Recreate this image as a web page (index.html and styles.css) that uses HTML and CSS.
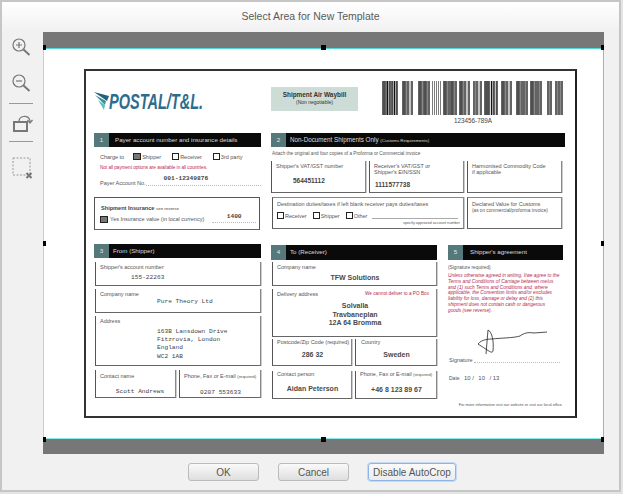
FILE: index.html
```html
<!DOCTYPE html>
<html lang="en">
<head>
    <meta charset="UTF-8">
    <title>Select Area for New Template</title>
    <link rel="stylesheet" href="styles.css">
</head>
<body>
    <div class="dialog">
        <div class="title">Select Area for New Template</div>
        <div class="main">
            <div class="toolbar">
                <svg class="tool" width="20" height="20" viewBox="0 0 20 20">
                    <circle cx="8" cy="8" r="6"/>
                    <path d="M5 8h6M8 5v6"/>
                    <path class="thick" d="M12.500 12.500l6 5.500"/>
                </svg>
                <svg class="tool" width="20" height="20" viewBox="0 0 20 20">
                    <circle cx="8" cy="8" r="6"/>
                    <path d="M5 8h6"/>
                    <path class="thick" d="M12.500 12.500l6 5.500"/>
                </svg>
                <div class="sep"></div>
                <svg class="tool" width="22" height="20" viewBox="0 0 22 20">
                    <rect class="thick" x="2" y="8" width="13" height="9"/>
                    <path d="M7 7.500c0-6 9-7 11-1l0 2"/>
                    <path d="M15.500 6l2.500 3 2.500-3"/>
                </svg>
                <div class="sep"></div>
                <svg class="tool" width="22" height="22" viewBox="0 0 22 22">
                    <rect class="dashed" x="1" y="1" width="17" height="17"/>
                    <path class="thick" d="M14.500 16l5 5M19.500 16l-5 5"/>
                </svg>
            </div>

            <div class="canvas">
                <div class="paper">
                    <div class="paper-top">
                        <div class="logo">
                            <svg width="15" height="19" viewBox="0 0 15 19">
                                <path class="wing-dark" d="M0 0l15 4-2 5z"/>
                                <path class="wing-mid" d="M1 3l11 6-1 4z"/>
                                <path class="wing-light" d="M4 8l7 5-1 5z"/>
                            </svg>
                            <span class="logo-text">POSTAL/T&amp;L.</span>
                        </div>
                        <div class="waybill">
                            <div class="waybill-name">Shipment Air Waybill</div>
                            <div class="waybill-note">(Non negotiable)</div>
                        </div>
                        <div class="barcode">
                            <svg width="184" height="34" viewBox="0 0 184 34">
                                <path class="bar-gray" d="M3 0v34M5.500 0v34M8 0v34M12 0v34M15 0v34M23 0v34M25.500 0v34M29 0v34M39 0v34M41.500 0v34M44 0v34M46.500 0v34M64 0v34M66.500 0v34M71 0v34M73.500 0v34M80 0v34M82.500 0v34M86 0v34M94.500 0v34M98 0v34M105 0v34M107 0v34M112 0v34M115 0v34M122 0v34M124.500 0v34M128 0v34M137 0v34M139.500 0v34M144.500 0v34M151 0v34M153.500 0v34M158.500 0v34M168.500 0v34M176.500 0v34M179.500 0v34"/>
                                <path class="bar-thin" d="M51.500 0v34M53.500 0v34M55.500 0v34M57.500 0v34M59.500 0v34"/>
                                <path class="bar-dark" d="M2 0v34M4 0v34M6.500 0v34M9 0v34M11 0v34M13.500 0v34M16 0v34M22 0v34M24 0v34M27 0v34M31 0v34M38 0v34M40 0v34M43 0v34M45 0v34M48 0v34M63 0v34M65 0v34M68 0v34M70 0v34M72 0v34M75 0v34M79 0v34M81 0v34M84 0v34M88 0v34M93 0v34M96 0v34M100 0v34M104 0v34M106 0v34M108 0v34M110.500 0v34M113 0v34M116 0v34M121 0v34M123 0v34M126 0v34M130 0v34M136 0v34M138 0v34M141 0v34M143 0v34M146 0v34M150 0v34M152 0v34M155 0v34M157 0v34M160 0v34M167 0v34M170 0v34M175 0v34M178 0v34M181 0v34"/>
                            </svg>
                            <div class="barcode-num">123456-789A</div>
                        </div>
                    </div>

                    <div class="row-upper">
                        <div class="col-payer">
                            <div class="sec-head"><span class="sec-num">1</span><span class="sec-name">Payer account number and insurance details</span></div>
                            <div class="charge">
                                <span class="charge-label">Charge to</span>
                                <span class="check on"></span><span class="opt opt-wide">Shipper</span>
                                <span class="check"></span><span class="opt opt-wide">Receiver</span>
                                <span class="check"></span><span class="opt">3rd party</span>
                            </div>
                            <div class="red note">Not all payment options are available in all countries.</div>
                            <div class="payer-line">
                                <span>Payer Account No.</span>
                                <span class="fill"><span class="mono bold">001-12349876</span></span>
                            </div>
                            <div class="insurance">
                                <div class="ins-title"><b>Shipment Insurance</b> <small>see reverse</small></div>
                                <div class="ins-row">
                                    <span class="check on"></span>
                                    <span>Yes Insurance value (in local currency)</span>
                                    <span class="fill ins-fill"><span class="mono bold">1400</span></span>
                                </div>
                            </div>
                        </div>

                        <div class="col-goods">
                            <div class="sec-head"><span class="sec-num">2</span><span class="sec-name sec-name-big">Non-Document Shipments Only <small>(Customs Requirements)</small></span></div>
                            <div class="attach">Attach the original and four copies of a Proforma or Commercial invoice</div>
                            <div class="goods-grid">
                                <div class="box">
                                    <div>Shipper's VAT/GST number</div>
                                    <div class="goods-val goods-val-a">564451112</div>
                                </div>
                                <div class="box">
                                    <div>Receiver's VAT/GST or<br>Shipper's EIN/SSN</div>
                                    <div class="goods-val goods-val-b">1111577738</div>
                                </div>
                                <div class="box">
                                    <div>Harmonised Commodity Code<br>if applicable</div>
                                </div>
                                <div class="box box-wide">
                                    <div>Destination duties/taxes if left blank receiver pays duties/taxes</div>
                                    <div class="dest-row">
                                        <span class="check"></span><span class="opt opt-wide">Receiver</span>
                                        <span class="check"></span><span class="opt opt-wide">Shipper</span>
                                        <span class="check"></span><span class="opt">Other</span>
                                        <span class="dest-line"></span>
                                    </div>
                                    <div class="specify">specify approved account number</div>
                                </div>
                                <div class="box">
                                    <div>Declared Value for Customs<br><span class="declared-note">(as on commercial/proforma invoice)</span></div>
                                </div>
                            </div>
                        </div>
                    </div>

                    <div class="row-lower">
                        <div class="col-from">
                            <div class="sec-head"><span class="sec-num">3</span><span class="sec-name">From (Shipper)</span></div>
                            <div class="box h-24 first">
                                <div>Shipper's account number</div>
                                <div class="mono indent-a">155-22263</div>
                            </div>
                            <div class="box h-24">
                                <div>Company name</div>
                                <div class="mono indent-b up-3">Pure Theory Ltd</div>
                            </div>
                            <div class="box h-50">
                                <div>Address</div>
                                <div class="mono indent-b address">163B Lansdown Drive<br>Fitzrovia, London<br>England<br>WC2 1AB</div>
                            </div>
                            <div class="pair">
                                <div class="box h-28">
                                    <div>Contact name</div>
                                    <div class="mono center down-8 nudge">Scott Andrews</div>
                                </div>
                                <div class="box h-28">
                                    <div>Phone, Fax or E-mail <small>(required)</small></div>
                                    <div class="mono center down-8">0207 553633</div>
                                </div>
                            </div>
                        </div>

                        <div class="col-to">
                            <div class="sec-head"><span class="sec-num">4</span><span class="sec-name">To (Receiver)</span></div>
                            <div class="box h-24 first">
                                <div>Company name</div>
                                <div class="val val-company center">TFW Solutions</div>
                            </div>
                            <div class="box h-48">
                                <div class="delivery-head"><span>Delivery address</span><span class="red">We cannot deliver to a PO Box</span></div>
                                <div class="val val-address center">Solvalla<br>Travbaneplan<br>12A 64 Bromma</div>
                            </div>
                            <div class="pair pair-tight">
                                <div class="box h-27">
                                    <div>Postcode/Zip Code (required)</div>
                                    <div class="val val-post center">286 32</div>
                                </div>
                                <div class="box h-27">
                                    <div class="indent-c">Country</div>
                                    <div class="val val-post center">Sweden</div>
                                </div>
                            </div>
                            <div class="pair pair-tight pair-gap">
                                <div class="box h-28">
                                    <div>Contact person</div>
                                    <div class="val val-contact center">Aidan Peterson</div>
                                </div>
                                <div class="box h-28">
                                    <div>Phone, Fax or E-mail <small>(required)</small></div>
                                    <div class="val val-contact center">+46 8 123 89 67</div>
                                </div>
                            </div>
                        </div>

                        <div class="col-sign">
                            <div class="sec-head"><span class="sec-num">5</span><span class="sec-name">Shipper's agreement</span></div>
                            <div class="sign-req">(Signature required)</div>
                            <div class="red terms">Unless otherwise agreed in writing, I/we agree to the<br>Terms and Conditions of Carriage between me/us<br>and (1) such Terms and Conditions and, where<br>applicable, the Convention limits and/or excludes<br>liability for loss, damage or delay and (2) this<br>shipment does not contain cash or dangerous<br>goods (see reverse).</div>
                            <svg class="signature" width="100" height="40" viewBox="0 0 100 40">
                                <path d="M30 27L32 3C36 5 38 14 37 24C36 27 33 24 22 17C26 12 34 12 36 12C44 11 58 11 64 9C68 6 72 5 78 6L91 5"/>
                            </svg>
                            <div class="sign-line"><span>Signature</span><span class="fill"></span></div>
                            <div class="date">Date <span>10 /</span> <span>10</span> <span>/ 13</span></div>
                            <div class="more">For more information visit our website or visit our local office</div>
                        </div>
                    </div>
                </div>

                <span class="handle h-tl"></span>
                <span class="handle h-tc"></span>
                <span class="handle h-tr"></span>
                <span class="handle h-ml"></span>
                <span class="handle h-mr"></span>
                <span class="handle h-bl"></span>
                <span class="handle h-bc"></span>
                <span class="handle h-br"></span>
            </div>
        </div>
        <div class="buttons">
            <button class="btn btn-ok">OK</button>
            <button class="btn btn-cancel">Cancel</button>
            <button class="btn btn-auto">Disable AutoCrop</button>
        </div>
    </div>
</body>
</html>
```

FILE: styles.css
```css
html, body {
    margin: 0;
    padding: 0;
    background: #e4e4e4;
}
body {
    width: 623px;
    height: 494px;
    overflow: hidden;
    font-family: "Liberation Sans", Arial, sans-serif;
}
.dialog {
    box-sizing: border-box;
    width: 621px;
    height: 492px;
    border: 2px solid #c6c6c6;
    background: #f1f1f1;
    display: flex;
    flex-direction: column;
}
.title {
    height: 30px;
    line-height: 28px;
    text-align: center;
    font-size: 10.500px;
    color: #5a5a5a;
    background: linear-gradient(#fff, #f1f1f1);
}
.main {
    display: flex;
    height: 422px;
}

/* left tools */
.toolbar {
    width: 41px;
    display: flex;
    flex-direction: column;
    align-items: center;
    padding: 5px 3px 0 0;
    box-sizing: border-box;
}
.tool {
    fill: none;
    stroke: #777;
    stroke-width: 1.200;
    flex: none;
}
.tool .thick {
    stroke-width: 2;
}
.tool .dashed {
    stroke: #999;
    stroke-width: 1;
    stroke-dasharray: 2 1.500;
}
.toolbar .tool:nth-child(1) {
    margin-bottom: 16px;
}
.toolbar .tool:nth-child(2) {
    margin-bottom: 10px;
}
.toolbar .tool:nth-child(4) {
    margin: 10px 0 7px 3px;
}
.toolbar .tool:nth-child(6) {
    margin: 15px 0 0 3px;
}
.sep {
    width: 24px;
    height: 1px;
    background: #999;
}

/* crop canvas */
.canvas {
    position: relative;
    box-sizing: border-box;
    width: 561px;
    height: 422px;
    padding: 21px 0 0 41px;
    background: #fff;
    border-top: 16px solid #777;
    border-bottom: 15px solid #777;
    box-shadow: inset 1px 0 0 #8eeaea, inset -1px 0 0 #4fd6d6, inset 0 1px 0 #4fd6d6, inset 0 -1px 0 #8eeaea;
}
.handle {
    position: absolute;
    width: 5px;
    height: 5px;
    background: #000;
}
.h-tl { left: 0; top: -3px; width: 3px; }
.h-tc { left: 278px; top: -3px; }
.h-tr { right: 0; top: -3px; width: 3px; }
.h-ml { left: 0; top: 193px; width: 3px; }
.h-mr { right: 0; top: 193px; width: 3px; }
.h-bl { left: 0; bottom: -3px; width: 3px; }
.h-bc { left: 278px; bottom: -3px; }
.h-br { right: 0; bottom: -3px; width: 3px; }

/* the waybill */
.paper {
    box-sizing: border-box;
    width: 493px;
    height: 349px;
    padding: 0 0 0 8px;
    border: 2px solid #333;
    border-right-color: #222;
    background: #fff;
    font-size: 5.500px;
    color: #555;
}
.paper small {
    font-size: 4.400px;
}
.paper-top {
    display: flex;
    height: 62px;
}
.logo {
    width: 177px;
    display: flex;
    align-items: flex-start;
    padding-top: 21px;
    box-sizing: border-box;
}
.logo svg {
    flex: none;
}
.wing-dark { fill: #24607f; }
.wing-mid { fill: #3c8f98; }
.wing-light { fill: #5fc0ba; }
.logo-text {
    display: inline-block;
    font-size: 22px;
    line-height: 20px;
    font-weight: bold;
    font-style: italic;
    color: #2d6c8e;
    white-space: nowrap;
    transform: scaleX(0.66);
    transform-origin: left top;
}
.waybill {
    width: 87px;
    height: 24px;
    margin-top: 16px;
    background: #cddcd6;
    text-align: center;
    box-sizing: border-box;
    padding-top: 4px;
    color: #333;
}
.waybill-name {
    font-weight: bold;
    font-size: 6.400px;
    line-height: 8px;
}
.waybill-note {
    font-size: 5px;
    line-height: 6px;
}
.barcode {
    margin: 10px 0 0 23px;
    width: 184px;
    text-align: center;
}
.barcode svg {
    display: block;
}
.bar-dark {
    stroke: #111;
    stroke-width: 1.300;
    fill: none;
}
.bar-gray {
    stroke: #888;
    stroke-width: 1;
    fill: none;
}
.bar-thin {
    stroke: #444;
    stroke-width: 0.700;
    fill: none;
}
.barcode-num {
    font-size: 6.300px;
    line-height: 8px;
    margin-top: 2px;
    color: #444;
}

.row-upper {
    display: flex;
    gap: 10px;
    height: 111px;
}
.row-lower {
    display: flex;
    gap: 10px;
}
.col-payer, .col-from {
    width: 167px;
}
.col-goods {
    width: 294px;
}
.col-to {
    width: 166px;
}
.col-sign {
    width: 115px;
    margin-left: 1px;
}
.col-to, .col-sign {
    padding-top: 1px;
}
.col-to .sec-head, .col-sign .sec-head {
    height: 15px;
}
.sec-head {
    display: flex;
    height: 14px;
    background: #0a0a0a;
    color: #ddd;
    font-size: 6.200px;
    line-height: 14px;
}
.sec-num {
    width: 15px;
    background: #55797a;
    text-align: center;
    margin-right: 6px;
    color: #e8e8e8;
}
.col-goods .sec-num, .col-from .sec-num, .col-to .sec-num {
    margin-right: 4px;
}
.col-sign .sec-num {
    margin-right: 7px;
}
.sec-name {
    white-space: nowrap;
}
.sec-name-big {
    font-size: 6.300px;
}
.sec-name-big small {
    font-size: 4.400px;
}
.red {
    color: #b8284e;
}
.mono {
    font-family: "Liberation Mono", "Courier New", monospace;
    font-size: 6.200px;
    color: #444;
    white-space: nowrap;
}
.bold {
    font-weight: bold;
}
.center {
    text-align: center;
}
.fill {
    flex: 1;
    border-bottom: 1px dotted #bbb;
    text-align: center;
    height: 8px;
}

/* check boxes */
.check {
    display: inline-block;
    box-sizing: border-box;
    width: 7px;
    height: 7px;
    border: 1px solid #222;
    vertical-align: -1px;
    flex: none;
}
.check.on {
    width: 8px;
    background: #777;
}
.opt {
    margin-left: 1px;
}
.opt-wide {
    margin-right: 6px;
}
.charge .opt-wide {
    margin-right: 11px;
}

/* section 1 */
.charge {
    display: flex;
    align-items: center;
    height: 7px;
    margin: 6px 0 0 6px;
}
.charge-label {
    margin-right: 9px;
}
.note {
    font-size: 4.600px;
    line-height: 6px;
    margin: 5px 0 0 6px;
}
.payer-line {
    display: flex;
    align-items: flex-end;
    margin: 6px 0 0 6px;
    height: 9px;
}
.payer-line .fill {
    text-align: left;
    padding-left: 18px;
}
.payer-line .mono {
    position: relative;
    top: -2px;
}
.insurance {
    box-sizing: border-box;
    width: 166px;
    height: 33px;
    margin-top: 11px;
    padding: 7px 3px 0 6px;
    border: 1px solid #555;
    border-bottom-color: #666;
}
.ins-title {
    color: #444;
    line-height: 7px;
    font-size: 5.600px;
}
.ins-row {
    display: flex;
    align-items: center;
    gap: 2px;
    margin: 3px 0 0 -1px;
}
.ins-fill {
    margin-left: 6px;
    height: 7px;
}
.ins-fill .mono {
    position: relative;
    top: -2px;
}

/* boxes */
.box {
    box-sizing: border-box;
    padding: 2px 3px 0 4px;
    border: 1px solid #555;
    border-top: none;
    border-right-color: #888;
    border-bottom: 1px solid #666;
    line-height: 6px;
    box-shadow: 1px 0 0 #ccc;
    overflow: hidden;
    white-space: nowrap;
}
.h-24 { height: 24px; margin-top: 3px; }
.h-50 { height: 50px; margin-top: 3px; }
.h-48 { height: 48px; margin-top: 3px; }
.h-27 { height: 27px; }
.h-28 { height: 28px; }
.col-from .first { margin-top: 4px; }
.col-to .first { margin-top: 2px; }
.pair {
    display: grid;
    grid-template-columns: 81px 82px;
    gap: 3px;
    margin: 4px 0 0 1px;
}
.pair .box {
    padding-top: 3px;
}
.pair-tight {
    margin: 2px 0 0 1px;
    grid-template-columns: 80px 82px;
}
.pair-tight .box {
    padding-top: 0;
}
.pair-gap {
    margin-top: 5px;
}
.indent-a {
    margin: 5px 0 0 31px;
}
.indent-b {
    margin-left: 57px;
}
.indent-c {
    margin-left: 1px;
}
.up-3 {
    margin-top: 2px;
}
.address {
    margin-top: 4px;
    line-height: 8.200px;
}
.down-8 {
    margin-top: 10px;
}
.nudge {
    padding-left: 8px;
}
.val {
    font-weight: bold;
    font-size: 7px;
    line-height: 8.500px;
    color: #4a4a4a;
}
.val-company {
    margin-top: 4px;
}
.val-address {
    margin-top: 5px;
}
.val-post {
    margin-top: 6px;
}
.val-contact {
    margin-top: 8px;
}
.delivery-head {
    display: flex;
    justify-content: space-between;
    padding-right: 4px;
}
.delivery-head .red {
    font-size: 4.700px;
}
.col-from .box, .col-to .box {
    margin-left: 1px;
}
.col-from .pair .box, .col-to .pair .box {
    margin-left: 0;
    margin-top: 0;
}

/* section 2 */
.attach {
    font-size: 4.700px;
    line-height: 6px;
    margin: 4px 0 4px 1px;
    white-space: nowrap;
}
.goods-grid {
    display: grid;
    grid-template-columns: 95px 95px 95px;
    column-gap: 3px;
    row-gap: 4px;
    grid-template-rows: 32px 32px;
}
.box-wide {
    grid-column: span 2;
    margin-left: 1px;
    padding-top: 3px;
}
.goods-grid .box:nth-child(4), .goods-grid .box:nth-child(5) {
    border-top: 1px solid #888;
}
.goods-grid .box:nth-child(5) {
    padding-top: 3px;
}
.declared-note {
    font-size: 4.700px;
}
.goods-val {
    font-weight: bold;
    font-size: 6.500px;
    color: #444;
}
.goods-val-a {
    margin: 9px 0 0 17px;
}
.goods-val-b {
    margin: 7px 0 0 1px;
}
.dest-row {
    display: flex;
    align-items: center;
    margin-top: 5px;
    white-space: nowrap;
}
.dest-line {
    flex: 1;
    margin-left: 5px;
    height: 5px;
    border-bottom: 1px solid #aaa;
    margin-right: 2px;
}
.specify {
    text-align: right;
    font-size: 3.800px;
    line-height: 6px;
    margin-top: 1px;
}

/* section 5 */
.sign-req {
    margin-top: 5px;
    line-height: 6px;
    font-size: 4.800px;
}
.terms {
    font-size: 4.800px;
    line-height: 5.800px;
    font-style: italic;
    margin: 2px 0 0 0;
    white-space: nowrap;
}
.signature {
    display: block;
    margin: 13px 0 0 8px;
    fill: none;
    stroke: #222;
    stroke-width: 0.800;
}
.sign-line {
    display: flex;
    margin-top: -10px;
    height: 8px;
    padding-left: 1px;
    width: 111px;
}
.sign-line .fill {
    margin-left: 1px;
    height: 5px;
}
.date {
    margin: 10px 0 0 1px;
    font-size: 5px;
}
.date span {
    font-size: 6px;
    margin-left: 3px;
}
.more {
    text-align: right;
    font-size: 3.900px;
    margin: 21px 1px 0 0;
    white-space: nowrap;
}

/* bottom buttons */
.buttons {
    display: flex;
    padding: 9px 0 0 186px;
    gap: 19px;
}
.btn {
    box-sizing: border-box;
    height: 18px;
    padding: 0;
    border: 1px solid #bbb;
    border-radius: 3px;
    background: linear-gradient(#fafafa, #dedede);
    font-family: "Liberation Sans", Arial, sans-serif;
    font-size: 10px;
    color: #555;
}
.btn-ok { width: 71px; }
.btn-cancel { width: 71px; }
.btn-auto {
    width: 88px;
    background: linear-gradient(#fafafa, #ececec);
    border-color: #8fb4e8;
    box-shadow: 0 0 0 1px #c5d9f3;
}
```
